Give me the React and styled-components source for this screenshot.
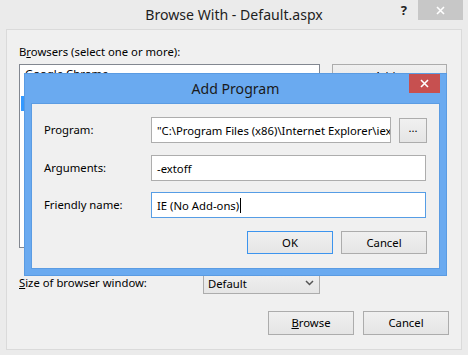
import React from 'react';
import styled, { createGlobalStyle } from 'styled-components';

const GlobalStyle = createGlobalStyle`
    html, body {
        margin: 0;
        padding: 0;
    }
    body {
        width: 468px;
        height: 355px;
        overflow: hidden;
        background: #ebebeb;
        font-family: "Noto Sans", "Open Sans", sans-serif;
        font-size: 11.3px;
        color: #000000;
    }
`;

const Window = styled.div`
    position: relative;
    width: 468px;
    height: 355px;
    display: flex;
    flex-direction: column;
    background: #ebebeb;
`;

const TitleBar = styled.div`
    height: 29px;
    display: grid;
    grid-template-columns: 70px 1fr 70px;
`;

const Title = styled.div`
    text-align: center;
    font-size: 14.1px;
    line-height: 29px;
    color: #1e1e1e;
`;

const Controls = styled.div`
    display: flex;
    align-items: flex-start;
    justify-content: flex-end;
    padding-right: 5px;
`;

const Help = styled.span`
    font-weight: bold;
    font-size: 13px;
    line-height: 20px;
    margin-right: 11px;
    color: #222222;
`;

const CloseBtn = styled.div`
    width: ${p => p.$w}px;
    height: ${p => p.$h}px;
    background: ${p => p.$bg};
    display: flex;
    align-items: center;
    justify-content: center;
`;

const Panel = styled.div`
    flex: 1;
    margin: 0 6px 6px 6px;
    border: 1px solid #dadada;
    background: #f0f0f0;
    padding: 14px 12px 14px 12px;
    display: flex;
    flex-direction: column;
`;

const Label = styled.div`
    line-height: 16px;
    height: 16px;
`;

const U = styled.span`
    text-decoration: underline;
`;

const ListRow = styled.div`
    display: flex;
    gap: 12px;
    margin-top: 4px;
`;

const ListBox = styled.div`
    width: 299px;
    height: 181px;
    background: #ffffff;
    border: 1px solid #828790;
    padding-top: 1px;
`;

const ListItem = styled.div`
    height: 15px;
    line-height: 15px;
    padding-left: 4px;
    margin: 0 1px;
    background: ${p => (p.$selected ? '#3399ff' : 'transparent')};
    color: ${p => (p.$selected ? '#ffffff' : '#000000')};
`;

const SideButtons = styled.div`
    display: flex;
    flex-direction: column;
    gap: 8px;
`;

const Button = styled.div`
    box-sizing: border-box;
    width: ${p => p.$w || 86}px;
    height: ${p => p.$h || 24}px;
    border: 1px solid ${p => (p.$default ? '#3c94ee' : '#acacac')};
    background: linear-gradient(#f0f0f0, #e5e5e5);
    display: flex;
    align-items: center;
    justify-content: center;
    line-height: 16px;
`;

const SizeRow = styled.div`
    display: flex;
    align-items: center;
    margin-top: 24px;
    height: 22px;
`;

const SizeLabel = styled(Label)`
    width: 184px;
`;

const Combo = styled.div`
    box-sizing: border-box;
    width: 117px;
    height: 22px;
    border: 1px solid #acacac;
    background: linear-gradient(#f0f0f0, #e5e5e5);
    display: flex;
    align-items: center;
    justify-content: space-between;
    padding: 0 5px 0 4px;
`;

const BottomRow = styled.div`
    display: flex;
    justify-content: flex-end;
    gap: 9px;
    margin-top: 17px;
`;

const Dialog = styled.div`
    position: absolute;
    left: 24px;
    top: 73px;
    box-sizing: border-box;
    width: 423px;
    height: 203px;
    background: #6aaaf0;
    border: 1px solid #5a9be2;
    display: flex;
    flex-direction: column;
    padding: 0 6px 6px 6px;
`;

const DialogHead = styled.div`
    height: 29px;
    display: grid;
    grid-template-columns: 40px 1fr 40px;
`;

const DialogTitle = styled.div`
    text-align: center;
    font-size: 14.1px;
    line-height: 29px;
    color: #1a1a1a;
`;

const DialogClose = styled.div`
    display: flex;
    justify-content: flex-end;
`;

const DialogBody = styled.div`
    flex: 1;
    background: #f0f0f0;
    border: 1px solid #5b9ce3;
    padding: 13px 12px 0 12px;
    display: flex;
    flex-direction: column;
`;

const FieldRow = styled.div`
    display: flex;
    align-items: center;
    margin-top: ${p => p.$mt}px;
`;

const FieldLabel = styled.div`
    width: 107px;
    line-height: 16px;
`;

const Field = styled.div`
    box-sizing: border-box;
    width: ${p => p.$w}px;
    height: 26px;
    background: #ffffff;
    border: 1px solid ${p => (p.$focus ? '#569de5' : '#adadad')};
    padding-left: 5px;
    display: flex;
    align-items: center;
    white-space: nowrap;
    overflow: hidden;
`;

const Caret = styled.span`
    display: inline-block;
    width: 1px;
    height: 15px;
    background: #000000;
    margin-left: 1px;
`;

const Browse = styled(Button)`
    margin-left: 8px;
    height: 25px;
    width: 28px;
    padding-bottom: 4px;
`;

const DialogButtons = styled.div`
    display: flex;
    justify-content: flex-end;
    gap: 8px;
    margin-top: 13px;
`;

const XIcon = ({ size = 9, color = '#ffffff' }) => (
    <svg width={size} height={size} viewBox="0 0 9 9">
        <path d="M1 1 L8 8 M8 1 L1 8" stroke={color} strokeWidth="1.6" />
    </svg>
);

const Chevron = () => (
    <svg width="9" height="6" viewBox="0 0 9 6">
        <path d="M1 1 L4.5 4.5 L8 1" stroke="#555555" strokeWidth="1.5" fill="none" />
    </svg>
);

export default function App() {
    return (
        <Window>
            <GlobalStyle />
            <TitleBar>
                <div />
                <Title>Browse With - Default.aspx</Title>
                <Controls>
                    <Help>?</Help>
                    <CloseBtn $w={45} $h={20} $bg="#c7c7c7">
                        <XIcon />
                    </CloseBtn>
                </Controls>
            </TitleBar>
            <Panel>
                <Label>B<U>r</U>owsers (select one or more):</Label>
                <ListRow>
                    <ListBox>
                        <ListItem>Google Chrome</ListItem>
                        <ListItem>Firefox</ListItem>
                        <ListItem $selected>Internet Explorer</ListItem>
                        <ListItem>Page Inspector</ListItem>
                    </ListBox>
                    <SideButtons>
                        <Button $w={115} $h={24}>Add...</Button>
                        <Button $w={115} $h={24}>Remove</Button>
                        <Button $w={115} $h={24}>Set as Default</Button>
                    </SideButtons>
                </ListRow>
                <SizeRow>
                    <SizeLabel><U>S</U>ize of browser window:</SizeLabel>
                    <Combo>
                        <span>Default</span>
                        <Chevron />
                    </Combo>
                </SizeRow>
                <BottomRow>
                    <Button><U>B</U>rowse</Button>
                    <Button>Cancel</Button>
                </BottomRow>
            </Panel>
            <Dialog>
                <DialogHead>
                    <div />
                    <DialogTitle>Add Program</DialogTitle>
                    <DialogClose>
                        <CloseBtn $w={31} $h={19} $bg="#c75050">
                            <XIcon />
                        </CloseBtn>
                    </DialogClose>
                </DialogHead>
                <DialogBody>
                    <FieldRow $mt={0}>
                        <FieldLabel>Program:</FieldLabel>
                        <Field $w={240}>"C:\Program Files (x86)\Internet Explorer\iex</Field>
                        <Browse>...</Browse>
                    </FieldRow>
                    <FieldRow $mt={12}>
                        <FieldLabel>Arguments:</FieldLabel>
                        <Field $w={275}>-extoff</Field>
                    </FieldRow>
                    <FieldRow $mt={11}>
                        <FieldLabel>Friendly name:</FieldLabel>
                        <Field $w={275} $focus>IE (No Add-ons)<Caret /></Field>
                    </FieldRow>
                    <DialogButtons>
                        <Button $default $h={23}>OK</Button>
                        <Button $h={23}>Cancel</Button>
                    </DialogButtons>
                </DialogBody>
            </Dialog>
        </Window>
    );
}
